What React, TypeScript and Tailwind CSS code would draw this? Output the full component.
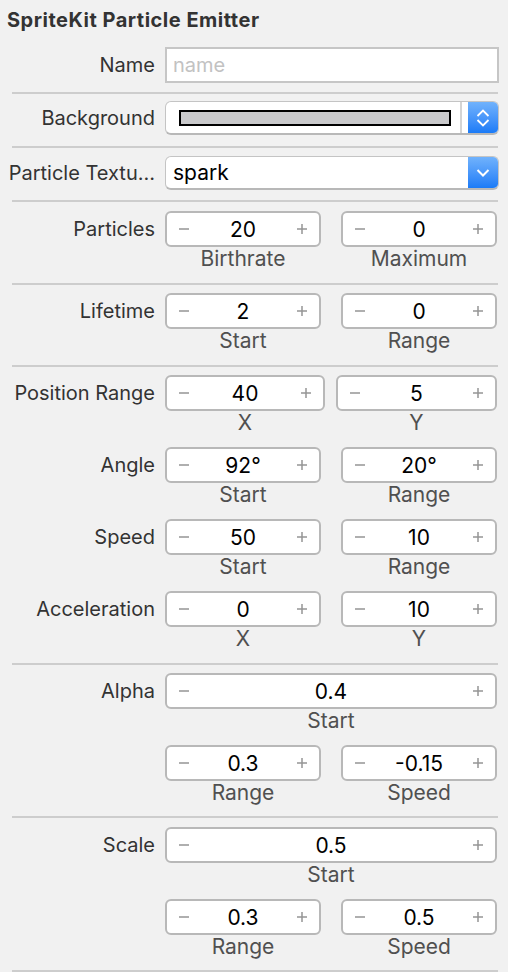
import React from 'react';

const font = { fontFamily: 'Inter, "Noto Sans", sans-serif' };

function Separator() {
  return <div className="h-[2px] bg-[#cdcdcd] ml-[12px] mr-[10px]" />;
}

function Minus() {
  return (
    <svg width="12" height="12" viewBox="0 0 12 12" className="shrink-0">
      <line x1="1" y1="6" x2="11" y2="6" stroke="#959595" strokeWidth="1.5" />
    </svg>
  );
}

function Plus() {
  return (
    <svg width="12" height="12" viewBox="0 0 12 12" className="shrink-0">
      <line x1="1" y1="6" x2="11" y2="6" stroke="#959595" strokeWidth="1.5" />
      <line x1="6" y1="1" x2="6" y2="11" stroke="#959595" strokeWidth="1.5" />
    </svg>
  );
}

interface StepperProps {
  value: string;
  caption: string;
  className?: string;
}

function Stepper({ value, caption, className = 'w-[156px]' }: StepperProps) {
  return (
    <div className={`flex flex-col ${className}`}>
      <div className="h-[36px] flex items-center justify-between px-[11px] bg-white border-2 border-[#b8b8b8] rounded-[6px]">
        <Minus />
        <span className="text-[21px] text-black leading-none">{value}</span>
        <Plus />
      </div>
      <div className="h-[22px] text-center text-[21px] leading-[23px] text-[#505050]">{caption}</div>
    </div>
  );
}

function Label({ children }: { children: React.ReactNode }) {
  return (
    <div className="w-[155px] shrink-0 h-[36px] flex items-center justify-end text-[20px] text-[#333333] whitespace-nowrap">
      {children}
    </div>
  );
}

function Row({ label, children, gap = 'gap-[20px]' }: { label?: string; children: React.ReactNode; gap?: string }) {
  return (
    <div className="flex items-start gap-[10px]">
      <Label>{label}</Label>
      <div className={`flex ${gap}`}>{children}</div>
    </div>
  );
}

function BlueButton({ double }: { double?: boolean }) {
  return (
    <div className="w-[30px] self-stretch flex items-center justify-center bg-gradient-to-b from-[#70b2fc] to-[#1a7bf7]">
      {double ? (
        <svg width="16" height="20" viewBox="0 0 16 20">
          <polyline points="2.5,8 8,2.5 13.5,8" fill="none" stroke="white" strokeWidth="1.8" />
          <polyline points="2.5,12 8,17.5 13.5,12" fill="none" stroke="white" strokeWidth="1.8" />
        </svg>
      ) : (
        <svg width="16" height="10" viewBox="0 0 16 10">
          <polyline points="2.5,2 8,7.5 13.5,2" fill="none" stroke="white" strokeWidth="2" />
        </svg>
      )}
    </div>
  );
}

export default function App() {
  return (
    <div className="w-[508px] h-[972px] bg-[#f1f1f1] overflow-hidden" style={font}>
      {/* Title */}
      <div className="h-[40px] flex items-center px-[7px] text-[20px] tracking-[0.5px] font-bold text-[#333333]">
        SpriteKit Particle Emitter
      </div>

      {/* Name */}
      <div className="pt-[7px] pb-[9px] flex gap-[10px]">
        <div className="w-[155px] h-[36px] flex items-center justify-end text-[20px] text-[#333333]">Name</div>
        <div className="w-[334px] h-[36px] bg-white border-2 border-[#c6c6c6] flex items-center px-[6px] text-[20px] text-[#c2c2c2]">
          name
        </div>
      </div>
      <Separator />

      {/* Background */}
      <div className="pt-[7px] pb-[11px] flex gap-[10px]">
        <div className="w-[155px] h-[34px] flex items-center justify-end text-[20px] text-[#333333]">Background</div>
        <div className="w-[334px] h-[34px] flex bg-white border border-[#c4c4c4] border-b-2 border-b-[#b8b8b8] rounded-[6px] overflow-hidden">
          <div className="flex-1 flex items-center pl-[13px]">
            <div className="w-[272px] h-[16px] border-2 border-black bg-[#c9c9cb]" />
          </div>
          <div className="w-[2px] self-stretch bg-[#d4d4d4]" />
          <div className="w-[6px]" />
          <BlueButton double />
        </div>
      </div>
      <Separator />

      {/* Texture */}
      <div className="pt-[8px] pb-[10px] flex gap-[10px]">
        <div className="w-[155px] h-[34px] flex items-center justify-end text-[20px] text-[#333333] whitespace-nowrap">
          Particle Textu…
        </div>
        <div className="w-[334px] h-[34px] flex bg-white border border-[#c4c4c4] border-b-2 border-b-[#b8b8b8] rounded-[6px] overflow-hidden">
          <div className="flex-1 flex items-center pl-[7px] text-[21px] text-black">spark</div>
          <BlueButton />
        </div>
      </div>
      <Separator />

      {/* Particles */}
      <div className="pt-[9px] pb-[14px]">
        <Row label="Particles">
          <Stepper value="20" caption="Birthrate" />
          <Stepper value="0" caption="Maximum" />
        </Row>
      </div>
      <Separator />

      {/* Lifetime */}
      <div className="pt-[8px] pb-[14px]">
        <Row label="Lifetime">
          <Stepper value="2" caption="Start" />
          <Stepper value="0" caption="Range" />
        </Row>
      </div>
      <Separator />

      {/* Motion */}
      <div className="pt-[8px] pb-[14px] flex flex-col gap-[14px]">
        <Row label="Position Range" gap="gap-[11px]">
          <Stepper value="40" caption="X" className="w-[160px]" />
          <Stepper value="5" caption="Y" className="w-[161px]" />
        </Row>
        <Row label="Angle">
          <Stepper value="92°" caption="Start" />
          <Stepper value="20°" caption="Range" />
        </Row>
        <Row label="Speed">
          <Stepper value="50" caption="Start" />
          <Stepper value="10" caption="Range" />
        </Row>
        <Row label="Acceleration">
          <Stepper value="0" caption="X" />
          <Stepper value="10" caption="Y" />
        </Row>
      </div>
      <Separator />

      {/* Alpha */}
      <div className="pt-[8px] pb-[13px] flex flex-col gap-[14px]">
        <Row label="Alpha">
          <Stepper value="0.4" caption="Start" className="w-[332px]" />
        </Row>
        <Row>
          <Stepper value="0.3" caption="Range" />
          <Stepper value="-0.15" caption="Speed" />
        </Row>
      </div>
      <Separator />

      {/* Scale */}
      <div className="pt-[9px] pb-[13px] flex flex-col gap-[14px]">
        <Row label="Scale">
          <Stepper value="0.5" caption="Start" className="w-[332px]" />
        </Row>
        <Row>
          <Stepper value="0.3" caption="Range" />
          <Stepper value="0.5" caption="Speed" />
        </Row>
      </div>
      <Separator />
    </div>
  );
}
